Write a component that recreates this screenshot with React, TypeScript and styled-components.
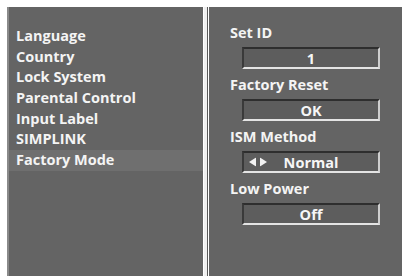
import React from "react"
import styled, { createGlobalStyle } from "styled-components"

const GlobalStyle = createGlobalStyle`
  html, body {
    margin: 0;
    padding: 0;
    background: #ffffff;
  }
  body {
    font-family: "Open Sans", "DejaVu Sans", sans-serif;
  }
`

const menuItems = [
  "Language",
  "Country",
  "Lock System",
  "Parental Control",
  "Input Label",
  "SIMPLINK",
  "Factory Mode",
]

const ACTIVE_ITEM = "Factory Mode"

interface Setting {
  label: string
  value: string
  arrows?: boolean
}

const settings: Setting[] = [
  { label: "Set ID", value: "1" },
  { label: "Factory Reset", value: "OK" },
  { label: "ISM Method", value: "Normal", arrows: true },
  { label: "Low Power", value: "Off" },
]

const App: React.FC = () => {
  return (
    <>
      <GlobalStyle />
      <Screen>
        <MenuPanel>
          <MenuList>
            {menuItems.map(item => (
              <MenuItem key={item} $active={item === ACTIVE_ITEM}>
                {item}
              </MenuItem>
            ))}
          </MenuList>
        </MenuPanel>
        <Divider />
        <SettingsPanel>
          {settings.map(s => (
            <SettingGroup key={s.label}>
              <SettingLabel>{s.label}</SettingLabel>
              <ValueBox>
                {s.arrows && (
                  <Arrows>
                    <svg width="18" height="9" viewBox="0 0 18 9">
                      <polygon points="0,4.5 7,0 7,9" fill="#f2f2f2" />
                      <polygon points="18,4.5 11,0 11,9" fill="#f2f2f2" />
                    </svg>
                  </Arrows>
                )}
                {s.value}
              </ValueBox>
            </SettingGroup>
          ))}
        </SettingsPanel>
      </Screen>
    </>
  )
}

const Screen = styled.div`
  display: flex;
  width: 404px;
  height: 276px;
  box-sizing: border-box;
  padding: 7px 2px 0 7px;
  background: #ffffff;
  overflow: hidden;
`

const MenuPanel = styled.div`
  width: 196px;
  flex-shrink: 0;
  background: #646464;
  border-left: 2px solid #8a8a8a;
  box-sizing: border-box;
  padding-top: 19px;
`

const MenuList = styled.ul`
  list-style: none;
  margin: 0;
  padding: 0;
`

const MenuItem = styled.li<{ $active: boolean }>`
  height: 20.7px;
  line-height: 20.7px;
  padding-left: 7px;
  font-size: 14.5px;
  font-weight: 700;
  color: #f4f4f4;
  background: ${({ $active }) => ($active ? "#6f6f6f" : "transparent")};
`

const Divider = styled.div`
  width: 1px;
  flex-shrink: 0;
  margin: 0 1px;
  background: #5a5a5a;
  border-left: 3px solid #f0f0f0;
`

const SettingsPanel = styled.div`
  flex: 1;
  display: flex;
  flex-direction: column;
  gap: 7px;
  background: #646464;
  box-sizing: border-box;
  padding: 17px 0 0 21px;
`

const SettingGroup = styled.div`
  display: flex;
  flex-direction: column;
  gap: 5px;
`

const SettingLabel = styled.div`
  height: 18px;
  line-height: 18px;
  font-size: 14.5px;
  font-weight: 700;
  color: #f4f4f4;
`

const ValueBox = styled.div`
  position: relative;
  width: 138px;
  height: 22px;
  box-sizing: border-box;
  margin-left: 12px;
  border-top: 2px solid #2e2e2e;
  border-left: 2px solid #3a3a3a;
  border-bottom: 2px solid #e4e4e4;
  border-right: 2px solid #cfcfcf;
  background: #5d5d5d;
  display: flex;
  align-items: center;
  justify-content: center;
  font-size: 14.5px;
  font-weight: 700;
  color: #f6f6f6;
`

const Arrows = styled.span`
  position: absolute;
  left: 5px;
  top: 50%;
  transform: translateY(-50%);
  display: flex;
`

export default App
